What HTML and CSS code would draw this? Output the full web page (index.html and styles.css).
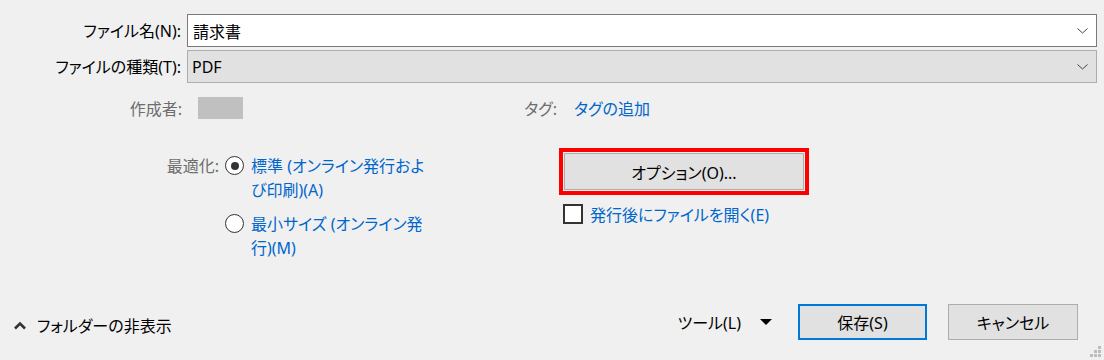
FILE: index.html
```html
<!DOCTYPE html>
<html lang="ja">
<head>
  <meta charset="UTF-8">
  <title>名前を付けて保存</title>
  <link rel="stylesheet" href="styles.css">
</head>
<body>
  <div class="dialog">
    <div class="fields">
      <label class="field-label">ファイル名(N):</label>
      <div class="combo combo-edit">
        <span>請求書</span>
        <svg class="chevron" width="11" height="6" viewBox="0 0 11 6"><polyline points="0.5,0.5 5.5,5 10.5,0.5" fill="none" stroke="#444" stroke-width="1"/></svg>
      </div>
      <label class="field-label">ファイルの種類(T):</label>
      <div class="combo combo-select">
        <span>PDF</span>
        <svg class="chevron" width="11" height="6" viewBox="0 0 11 6"><polyline points="0.5,0.5 5.5,5 10.5,0.5" fill="none" stroke="#444" stroke-width="1"/></svg>
      </div>
    </div>

    <div class="meta">
      <span class="muted author-label">作成者:</span>
      <span class="author-box"></span>
      <span class="muted tag-label">タグ:</span>
      <span class="link">タグの追加</span>
    </div>

    <div class="options">
      <div class="optimize">
        <span class="muted opt-label">最適化:</span>
        <div class="radio-list">
          <label class="radio-item">
            <span class="radio checked"></span>
            <span class="radio-text link">標準 (オンライン発行およ<br>び印刷)(A)</span>
          </label>
          <label class="radio-item">
            <span class="radio"></span>
            <span class="radio-text link">最小サイズ (オンライン発<br>行)(M)</span>
          </label>
        </div>
      </div>
      <div class="publish">
        <div class="focus-frame">
          <button class="btn btn-options">オプション(O)...</button>
        </div>
        <label class="check-item">
          <span class="checkbox"></span>
          <span class="link">発行後にファイルを開く(E)</span>
        </label>
      </div>
    </div>

    <div class="footer">
      <div class="folder-toggle">
        <svg width="14" height="9" viewBox="0 0 14 9"><polyline points="2,7.5 7,2.5 12,7.5" fill="none" stroke="#333" stroke-width="2.6"/></svg>
        <span>フォルダーの非表示</span>
      </div>
      <div class="tools">
        <span>ツール(L)</span>
        <svg class="tools-arrow" width="12" height="6" viewBox="0 0 12 6"><polygon points="0,0 12,0 6,6" fill="#000"/></svg>
      </div>
      <button class="btn btn-save">保存(S)</button>
      <button class="btn btn-cancel">キャンセル</button>
    </div>

    <svg class="grip" width="12" height="12" viewBox="0 0 12 12" fill="#bcbcbc">
      <rect x="8" y="0" width="3" height="3"/>
      <rect x="4" y="4" width="3" height="3"/><rect x="8" y="4" width="3" height="3"/>
      <rect x="0" y="8" width="3" height="3"/><rect x="4" y="8" width="3" height="3"/><rect x="8" y="8" width="3" height="3"/>
    </svg>
  </div>
</body>
</html>
```

FILE: styles.css
```css
body {
  margin: 0;
  background: #f0f0f0;
  font-family: "Noto Sans", "Noto Sans CJK JP", sans-serif;
  font-size: 16px;
  font-feature-settings: "palt";
  color: #000;
}
.dialog {
  position: relative;
  height: 360px;
  box-sizing: border-box;
  padding-top: 14px;
  display: flex;
  flex-direction: column;
  overflow: hidden;
}
.fields {
  display: grid;
  grid-template-columns: 181px 910px;
  grid-auto-rows: 33px;
  column-gap: 6px;
  row-gap: 3px;
}
.field-label {
  align-self: center;
  text-align: right;
  line-height: 22px;
  white-space: nowrap;
}
.combo {
  box-sizing: border-box;
  display: flex;
  align-items: center;
  justify-content: space-between;
  padding: 0 8px 0 5px;
}
.combo-edit {
  background: #fff;
  border: 1px solid #7a7a7a;
}
.combo-select {
  background: #e1e1e1;
  border: 1px solid #adadad;
  padding-left: 4px;
}
.muted {
  color: #6d6d6d;
}
.link {
  color: #0066cc;
}
.meta {
  display: flex;
  align-items: center;
  height: 22px;
  margin-top: 14px;
}
.author-label {
  width: 182px;
  text-align: right;
  margin-right: 16px;
}
.author-box {
  width: 45px;
  height: 22px;
  background: #c0c0c0;
}
.tag-label {
  width: 57px;
  margin-left: 257px;
  margin-right: 17px;
  text-align: right;
}
.options {
  display: flex;
  align-items: flex-start;
  margin-top: 29px;
}
.optimize {
  width: 559px;
  display: flex;
  align-items: flex-start;
  padding-top: 6px;
}
.opt-label {
  width: 219px;
  margin-right: 6px;
  text-align: right;
  line-height: 24px;
}
.radio-list {
  display: flex;
  flex-direction: column;
  gap: 10px;
}
.radio-item {
  display: flex;
  align-items: flex-start;
  gap: 7px;
}
.radio {
  flex: none;
  width: 19px;
  height: 19px;
  margin-top: 2px;
  box-sizing: border-box;
  border: 1.5px solid #333;
  border-radius: 50%;
  background: #fff;
  display: grid;
  place-items: center;
}
.radio.checked::after {
  content: "";
  width: 8px;
  height: 8px;
  border-radius: 50%;
  background: #333;
}
.radio-text {
  white-space: nowrap;
  line-height: 24px;
}
.focus-frame {
  border: 4px solid #ff0000;
  padding: 1px;
}
.btn {
  font: inherit;
  color: #000;
  background: #e1e1e1;
  border: 1px solid #adadad;
  box-sizing: border-box;
  padding: 0;
  cursor: pointer;
}
.btn-options {
  display: block;
  width: 240px;
  height: 37px;
}
.check-item {
  display: flex;
  align-items: center;
  gap: 7px;
  margin: 7px 0 0 4px;
}
.checkbox {
  width: 20px;
  height: 20px;
  box-sizing: border-box;
  border: 2px solid #333;
  background: #fff;
}
.footer {
  margin-top: auto;
  margin-bottom: 20px;
  height: 36px;
  display: flex;
  align-items: center;
}
.folder-toggle {
  display: flex;
  align-items: center;
  gap: 10px;
  margin-left: 13px;
  padding-top: 6px;
}
.tools {
  margin-left: auto;
  display: flex;
  align-items: center;
}
.tools-arrow {
  margin-left: 19px;
}
.btn-save {
  width: 129px;
  height: 36px;
  margin-left: 26px;
  border: 2px solid #0078d7;
}
.btn-cancel {
  width: 130px;
  height: 36px;
  margin-left: 21px;
  margin-right: 26px;
}
.grip {
  position: absolute;
  right: 2px;
  bottom: 2px;
}
```
